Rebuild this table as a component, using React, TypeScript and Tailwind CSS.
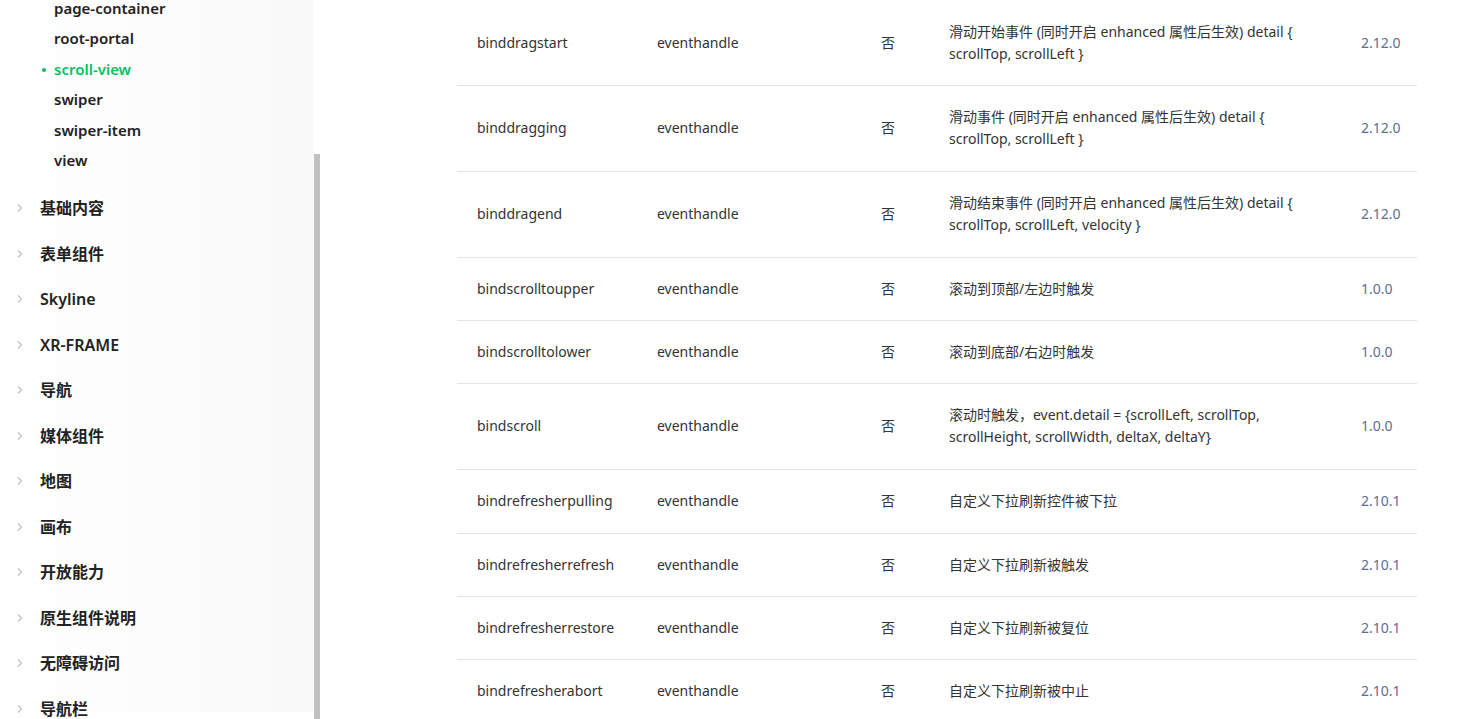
import React from "react";

const subItems = ["page-container", "root-portal", "scroll-view", "swiper", "swiper-item", "view"];
const cats = ["基础内容", "表单组件", "Skyline", "XR-FRAME", "导航", "媒体组件", "地图", "画布", "开放能力", "原生组件说明", "无障碍访问", "导航栏"];

type Row = { name: string; desc: React.ReactNode; ver: string; h: string };
const rows: Row[] = [
  { name: "binddragstart", desc: <>滑动开始事件 (同时开启 enhanced 属性后生效) detail {"{"}<br />scrollTop, scrollLeft {"}"}</>, ver: "2.12.0", h: "h-[86px]" },
  { name: "binddragging", desc: <>滑动事件 (同时开启 enhanced 属性后生效) detail {"{"}<br />scrollTop, scrollLeft {"}"}</>, ver: "2.12.0", h: "h-[86px]" },
  { name: "binddragend", desc: <>滑动结束事件 (同时开启 enhanced 属性后生效) detail {"{"}<br />scrollTop, scrollLeft, velocity {"}"}</>, ver: "2.12.0", h: "h-[86px]" },
  { name: "bindscrolltoupper", desc: <>滚动到顶部/左边时触发</>, ver: "1.0.0", h: "h-[63px]" },
  { name: "bindscrolltolower", desc: <>滚动到底部/右边时触发</>, ver: "1.0.0", h: "h-[63px]" },
  { name: "bindscroll", desc: <>滚动时触发，event.detail = {"{"}scrollLeft, scrollTop,<br />scrollHeight, scrollWidth, deltaX, deltaY{"}"}</>, ver: "1.0.0", h: "h-[86px]" },
  { name: "bindrefresherpulling", desc: <>自定义下拉刷新控件被下拉</>, ver: "2.10.1", h: "h-[64px]" },
  { name: "bindrefresherrefresh", desc: <>自定义下拉刷新被触发</>, ver: "2.10.1", h: "h-[63px]" },
  { name: "bindrefresherrestore", desc: <>自定义下拉刷新被复位</>, ver: "2.10.1", h: "h-[63px]" },
  { name: "bindrefresherabort", desc: <>自定义下拉刷新被中止</>, ver: "2.10.1", h: "h-[63px]" },
];

function Chevron() {
  return (
    <svg width="8" height="10" viewBox="0 0 8 10" className="shrink-0">
      <path d="M2 1.5 L5.5 5 L2 8.5" fill="none" stroke="#bdbdbd" strokeWidth="1.1" />
    </svg>
  );
}

export default function App() {
  const font = { fontFamily: '"Noto Sans", "Noto Sans CJK SC", sans-serif' };
  return (
    <div className="flex h-[719px] w-[1457px] overflow-hidden bg-white text-[#333]" style={font}>
      <aside className="relative h-full w-[320px] shrink-0 overflow-hidden">
        <div className="h-full w-[313px] bg-gradient-to-r from-white via-[#fcfcfc] to-[#f9f9f9]">
          <ul className="mt-[-7px] pb-[10px]">
            {subItems.map((s) => {
              const active = s === "scroll-view";
              return (
                <li key={s} className="relative flex h-[30.4px] items-center pl-[54px]">
                  {active && <span className="absolute left-[42px] top-[14px] h-[4px] w-[4px] rounded-full bg-[#07c160]" />}
                  <span className={`text-[15px] font-semibold ${active ? "text-[#07c160]" : "text-[#222]"}`}>{s}</span>
                </li>
              );
            })}
          </ul>
          <ul>
            {cats.map((c) => (
              <li key={c} className="flex h-[45.5px] items-center gap-[16px] pl-[16px]">
                <Chevron />
                <span className="text-[16px] font-semibold text-[#222]">{c}</span>
              </li>
            ))}
          </ul>
        </div>
        <div className="absolute left-[314px] top-[154px] h-[565px] w-[6px] bg-[#c1c1c1]" />
      </aside>
      <main className="flex-1 pl-[137px] pr-[40px]">
        <table className="mt-[-1px] w-[960px] table-fixed border-collapse text-[14px]">
          <colgroup>
            <col className="w-[180px]" />
            <col className="w-[224px]" />
            <col className="w-[68px]" />
            <col className="w-[412px]" />
            <col className="w-[76px]" />
          </colgroup>
          <tbody>
            {rows.map((r, i) => {
              const pt = i === 0 ? "pt-[2px]" : "";
              return (
                <tr key={r.name} className={`${r.h} border-b border-[#e5e5e5]`}>
                  <td className={`px-[20px] ${pt} align-middle leading-[22px] text-[#333]`}>{r.name}</td>
                  <td className={`px-[20px] ${pt} align-middle leading-[22px] text-[#333]`}>eventhandle</td>
                  <td className={`px-[20px] ${pt} align-middle leading-[22px] text-[#333]`}>否</td>
                  <td className={`px-[20px] ${pt} align-middle leading-[22px] text-[#333]`}>{r.desc}</td>
                  <td className={`px-[20px] ${pt} align-middle leading-[22px] text-[#5e6e8f]`}>{r.ver}</td>
                </tr>
              );
            })}
          </tbody>
        </table>
      </main>
    </div>
  );
}
